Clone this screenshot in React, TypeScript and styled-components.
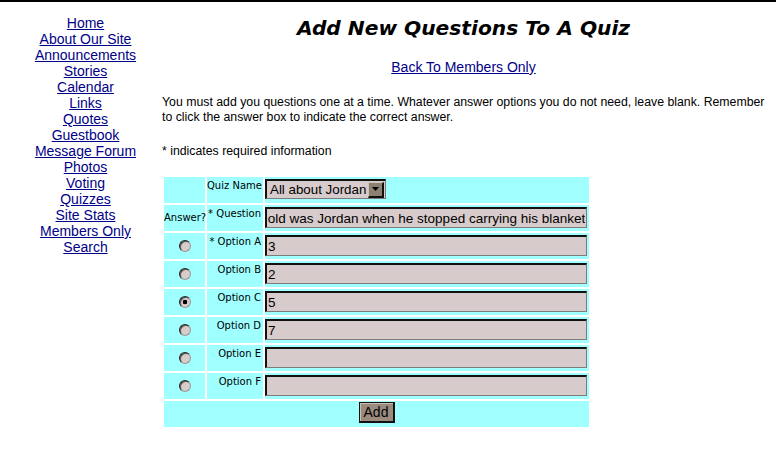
import React, { useEffect, useRef } from "react";
import styled, { createGlobalStyle } from "styled-components";

const GlobalStyle = createGlobalStyle`
  html, body {
    margin: 0;
    padding: 0;
    background: #fff;
  }
  body {
    border-top: 2px solid #000;
    font-family: "Liberation Sans", Arial, sans-serif;
    color: #000;
  }
`;

const Page = styled.div`
  display: flex;
  align-items: flex-start;
`;

const Nav = styled.nav`
  width: 153px;
  padding: 13px 0 0 9px;
  display: flex;
  flex-direction: column;
  align-items: center;
`;

const NavLink = styled.a`
  font-size: 14px;
  line-height: 16px;
  color: #000088;
  text-decoration: underline;
  white-space: nowrap;
`;

const Main = styled.main`
  flex: 1;
  min-width: 0;
  padding: 14px 3px 0 0;
`;

const Title = styled.h1`
  margin: 0;
  padding-right: 8px;
  text-align: center;
  font-family: "DejaVu Sans", Verdana, sans-serif;
  font-weight: bold;
  font-style: italic;
  font-size: 20.2px;
  line-height: 24px;
`;

const BackRow = styled.div`
  margin-top: 19px;
  padding-right: 8px;
  text-align: center;
  font-size: 14px;
  line-height: 16px;
`;

const Para = styled.p<{ $gap: number }>`
  margin: ${({ $gap }) => $gap}px 0 0;
  font-size: 12.3px;
  line-height: 15px;
`;

const QuizTable = styled.table`
  margin-top: 16px;
  border-spacing: 2px;
  table-layout: fixed;
  width: 429px;
`;

const Col = styled.col<{ $w: number }>`
  width: ${({ $w }) => $w}px;
`;

const Row = styled.tr`
  height: 26px;
`;

const BaseCell = styled.td`
  background: #a0ffff;
  padding: 0;
  font-family: "DejaVu Sans", Verdana, sans-serif;
  font-size: 10px;
  line-height: 12px;
  white-space: nowrap;
`;

const AnswerCell = styled(BaseCell)`
  text-align: center;
  vertical-align: middle;
`;

const LabelCell = styled(BaseCell)`
  text-align: right;
  vertical-align: top;
  padding: 3px 2px 0 0;
`;

const FieldCell = styled(BaseCell)`
  vertical-align: top;
  padding-top: 2px;
`;

const FooterCell = styled(BaseCell)`
  text-align: center;
  vertical-align: top;
  padding: 1px 0 3px;
`;

const fieldFill = "#d7cbcb";

const TextField = styled.input`
  display: block;
  box-sizing: border-box;
  width: 322px;
  height: 21px;
  margin: 0;
  padding: 0 1px;
  font-family: "Liberation Sans", Arial, sans-serif;
  font-size: 13.5px;
  color: #000;
  background: ${fieldFill};
  border-style: solid;
  border-width: 2px 1px 1px 2px;
  border-color: #111 #7c7c7c #7c7c7c #111;
  outline: none;
`;

const SelectBox = styled.div`
  display: flex;
  align-items: center;
  box-sizing: border-box;
  width: 121px;
  height: 20px;
  background: ${fieldFill};
  border-style: solid;
  border-width: 2px 1px 1px 2px;
  border-color: #111 #7c7c7c #7c7c7c #111;
  font-family: "Liberation Sans", Arial, sans-serif;
  font-size: 13.33px;
`;

const SelectText = styled.span`
  flex: 1;
  padding-left: 3px;
  white-space: nowrap;
`;

const ArrowButton = styled.span`
  display: flex;
  align-items: center;
  justify-content: center;
  flex: none;
  box-sizing: border-box;
  width: 16px;
  height: 16px;
  margin-right: 1px;
  background: #8c8073;
  border-style: solid;
  border-width: 1px 2px 2px 1px;
  border-color: #cfc4b8 #111 #111 #cfc4b8;
`;

const Radio = styled.input.attrs({ type: "radio" })`
  appearance: none;
  display: inline-block;
  width: 12px;
  height: 12px;
  margin: 0;
  border-radius: 50%;
  box-sizing: border-box;
  border: 1px solid;
  border-color: #222 #999 #999 #222;
  box-shadow: inset 1px 1px 0 #555;
  background: ${fieldFill};
  vertical-align: middle;

  &:checked {
    background: radial-gradient(circle, #000 0 2px, ${fieldFill} 2.6px);
  }
`;

const AddButton = styled.button`
  box-sizing: border-box;
  width: 36px;
  height: 21px;
  padding: 0;
  margin: 0;
  background: #9b8b7f;
  border-style: solid;
  border-width: 1px 2px 2px 1px;
  border-color: #111;
  box-shadow: inset 1px 1px 0 #cbbfb3;
  font-family: "Liberation Sans", Arial, sans-serif;
  font-size: 14px;
  color: #000;
`;

const navItems = [
  "Home",
  "About Our Site",
  "Announcements",
  "Stories",
  "Calendar",
  "Links",
  "Quotes",
  "Guestbook",
  "Message Forum",
  "Photos",
  "Voting",
  "Quizzes",
  "Site Stats",
  "Members Only",
  "Search",
];

const options = [
  { label: "* Option A", value: "3" },
  { label: "Option B", value: "2" },
  { label: "Option C", value: "5" },
  { label: "Option D", value: "7" },
  { label: "Option E", value: "" },
  { label: "Option F", value: "" },
];

const QUESTION = "How old was Jordan when he stopped carrying his blanket";

export default function App() {
  const questionRef = useRef<HTMLInputElement>(null);

  useEffect(() => {
    const el = questionRef.current;
    if (el) el.scrollLeft = el.scrollWidth;
  }, []);

  return (
    <>
      <GlobalStyle />
      <Page>
        <Nav>
          {navItems.map((item) => (
            <NavLink key={item} href="#">
              {item}
            </NavLink>
          ))}
        </Nav>
        <Main>
          <Title>Add New Questions To A Quiz</Title>
          <BackRow>
            <NavLink href="#">Back To Members Only</NavLink>
          </BackRow>
          <Para $gap={20}>
            You must add you questions one at a time. Whatever answer options
            you do not need, leave blank. Remember to click the answer box to
            indicate the correct answer.
          </Para>
          <Para $gap={19}>* indicates required information</Para>
          <QuizTable>
            <colgroup>
              <Col $w={41} />
              <Col $w={56} />
              <Col $w={324} />
            </colgroup>
            <tbody>
              <Row>
                <AnswerCell />
                <LabelCell>Quiz Name</LabelCell>
                <FieldCell>
                  <SelectBox>
                    <SelectText>All about Jordan</SelectText>
                    <ArrowButton>
                      <svg width="7" height="4" viewBox="0 0 7 4">
                        <path d="M0 0h7L3.5 4z" fill="#000" />
                      </svg>
                    </ArrowButton>
                  </SelectBox>
                </FieldCell>
              </Row>
              <Row>
                <AnswerCell>Answer?</AnswerCell>
                <LabelCell>* Question</LabelCell>
                <FieldCell>
                  <TextField ref={questionRef} defaultValue={QUESTION} />
                </FieldCell>
              </Row>
              {options.map((opt, i) => (
                <Row key={opt.label}>
                  <AnswerCell>
                    <Radio name="answer" defaultChecked={i === 2} />
                  </AnswerCell>
                  <LabelCell>{opt.label}</LabelCell>
                  <FieldCell>
                    <TextField defaultValue={opt.value} />
                  </FieldCell>
                </Row>
              ))}
              <Row>
                <FooterCell colSpan={3}>
                  <AddButton>Add</AddButton>
                </FooterCell>
              </Row>
            </tbody>
          </QuizTable>
        </Main>
      </Page>
    </>
  );
}
